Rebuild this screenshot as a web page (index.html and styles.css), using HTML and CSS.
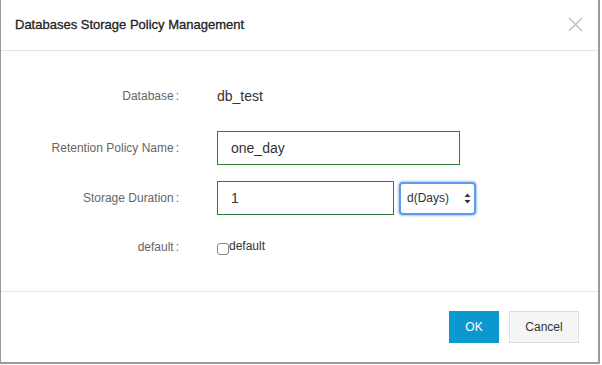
FILE: index.html
```html
<!DOCTYPE html>
<html lang="en">
  <head>
    <meta charset="utf-8">
    <link rel="stylesheet" href="styles.css">
    <title>Databases Storage Policy Management</title>
  </head>
  <body>
    <div class="dialog">
      <div class="dialog-header">
        <h2 class="dialog-title">Databases Storage Policy Management</h2>
        <button class="close-btn" aria-label="Close">
          <svg width="15" height="15" viewBox="0 0 15 15">
            <path d="M1 1 L14 14 M14 1 L1 14" stroke="#c4c4c4" stroke-width="1.6" fill="none" />
          </svg>
        </button>
      </div>

      <div class="dialog-body">
        <div class="form-row first">
          <label class="form-label">Database</label>
          <div class="form-field">
            <span class="static-value">db_test</span>
          </div>
        </div>

        <div class="form-row">
          <label class="form-label">Retention Policy Name</label>
          <div class="form-field">
            <input class="text-input wide" type="text" value="one_day">
          </div>
        </div>

        <div class="form-row">
          <label class="form-label">Storage Duration</label>
          <div class="form-field">
            <input class="text-input narrow" type="text" value="1">
            <div class="select-wrap">
              <select class="unit-select">
                <option>d(Days)</option>
                <option>h(Hours)</option>
                <option>w(Weeks)</option>
              </select>
              <svg class="select-arrows" width="7" height="11" viewBox="0 0 7 11">
                <path d="M3.5 0.5 L6.5 4 L0.5 4 Z M3.5 10.5 L6.5 7 L0.5 7 Z" fill="#333" />
              </svg>
            </div>
          </div>
        </div>

        <div class="form-row short">
          <label class="form-label">default</label>
          <div class="form-field">
            <label class="check">
              <input type="checkbox" class="check-box">default
            </label>
          </div>
        </div>
      </div>

      <div class="dialog-footer">
        <button class="btn btn-primary">OK</button>
        <button class="btn btn-default">Cancel</button>
      </div>
    </div>
  </body>
</html>
```

FILE: styles.css
```css
body {
  margin: 0;
  background-color: #fff;
  font-family: "Liberation Sans", Arial, sans-serif;
}

.dialog {
  width: 597px;
  height: 362px;
  border-left: 1px solid #9a9a9a;
  border-right: 2px solid #9a9a9a;
  border-bottom: 2px solid #9a9a9a;
  background-color: #fff;
  display: flex;
  flex-direction: column;
}

.dialog-header {
  height: 50px;
  border-bottom: 1px solid #e4e4e4;
  display: flex;
  align-items: center;
  justify-content: space-between;
  padding: 0 15px 0 14px;
}

.dialog-title {
  margin: 0;
  font-size: 13px;
  font-weight: normal;
  color: #222;
  -webkit-text-stroke: 0.3px #222;
  padding-bottom: 2px;
}

.close-btn {
  border: none;
  background: none;
  padding: 0;
  width: 15px;
  height: 15px;
  cursor: pointer;
  margin-bottom: 2px;
}

.dialog-body {
  flex: 1;
  padding-top: 30px;
  display: flex;
  flex-direction: column;
  gap: 16px;
}

.form-row {
  display: flex;
  align-items: center;
  height: 34px;
}

.first {
  padding-bottom: 4px;
  height: 30px;
}

.form-label {
  width: 178px;
  text-align: right;
  font-size: 12px;
  color: #666;
  margin-right: 38px;
}

.form-label::after {
  content: ":";
  margin-left: 2px;
}

.form-field {
  display: flex;
  align-items: center;
}

.static-value {
  font-size: 14px;
  color: #333;
}

.text-input {
  box-sizing: border-box;
  height: 34px;
  border: 1px solid #2e7d32;
  padding: 0 13px;
  font-family: "Liberation Sans", Arial, sans-serif;
  font-size: 14px;
  color: #333;
  outline: none;
}

.wide {
  width: 243px;
}

.narrow {
  width: 177px;
}

.select-wrap {
  position: relative;
  margin-left: 5px;
}

.unit-select {
  appearance: none;
  -webkit-appearance: none;
  box-sizing: border-box;
  width: 77px;
  height: 33px;
  border: 2px solid #5d9ce8;
  border-radius: 4px;
  box-shadow: 0 0 2px 1px rgba(93, 156, 232, 0.55);
  background-color: #fff;
  padding: 0 0 0 6px;
  font-family: "Liberation Sans", Arial, sans-serif;
  font-size: 12px;
  color: #333;
  outline: none;
}

.select-arrows {
  position: absolute;
  right: 5px;
  top: 11px;
  pointer-events: none;
}

.short {
  height: 24px;
  margin-top: 4px;
}

.check {
  display: flex;
  align-items: flex-start;
  font-size: 12px;
  color: #333;
}

.check-box {
  appearance: none;
  -webkit-appearance: none;
  width: 12px;
  height: 12px;
  margin: 4px 0 0 0;
  border: 1px solid #8a8a8a;
  border-radius: 3px;
  background-color: #fff;
}

.dialog-footer {
  height: 70px;
  border-top: 1px solid #e4e4e4;
  display: flex;
  align-items: center;
  justify-content: flex-end;
  gap: 10px;
  padding-right: 19px;
}

.btn {
  height: 32px;
  font-family: "Liberation Sans", Arial, sans-serif;
  font-size: 12px;
  cursor: pointer;
}

.btn-primary {
  width: 50px;
  border: none;
  background-color: #0b98cf;
  color: #fff;
}

.btn-default {
  width: 70px;
  border: 1px solid #ddd;
  background-color: #f5f5f5;
  color: #333;
}
```
